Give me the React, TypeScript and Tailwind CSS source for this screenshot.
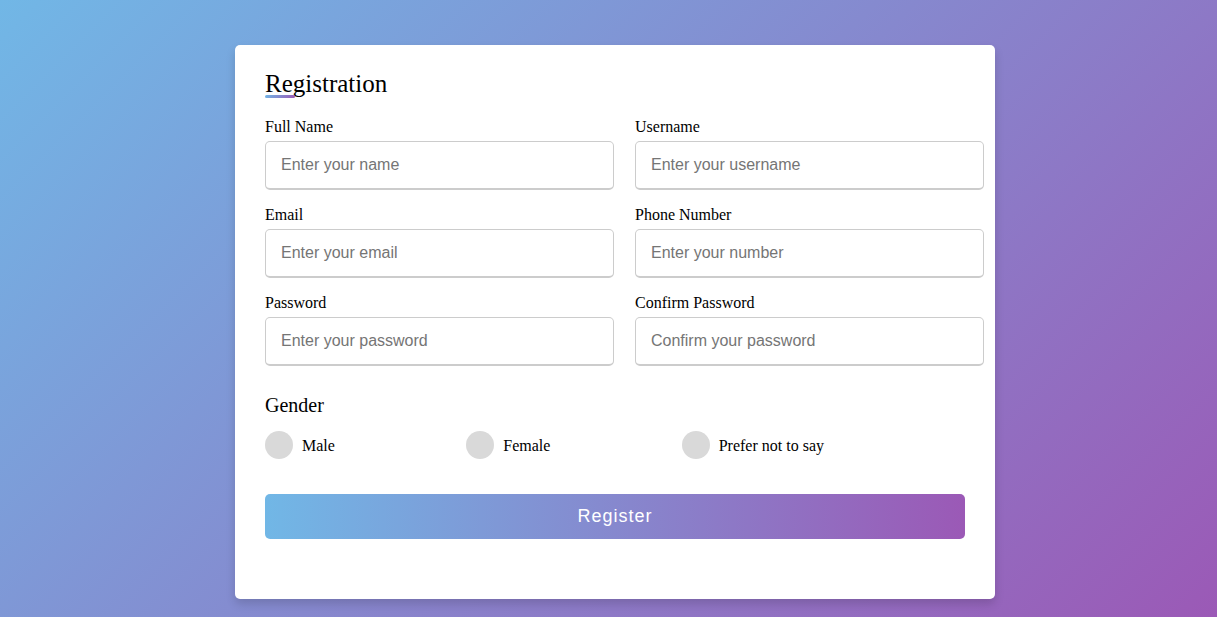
import { FC } from "react";

const fields = [
  { label: "Full Name", placeholder: "Enter your name" },
  { label: "Username", placeholder: "Enter your username" },
  { label: "Email", placeholder: "Enter your email" },
  { label: "Phone Number", placeholder: "Enter your number" },
  { label: "Password", placeholder: "Enter your password" },
  { label: "Confirm Password", placeholder: "Confirm your password" },
];

const genders = ["Male", "Female", "Prefer not to say"];

const App: FC = () => {
  return (
    <div className="min-h-screen w-full bg-[linear-gradient(135deg,#71b7e6,#9b59b6)] pt-[45px] pl-[235px] font-['Liberation_Serif',serif] text-black">
      <div className="w-[760px] h-[554px] rounded-[5px] bg-white px-[30px] pt-[25px] shadow-[0_5px_10px_rgba(0,0,0,0.15)]">
        {/* title */}
        <div className="relative h-[28px] text-[25px] leading-[28px]">
          Registration
          <span className="absolute left-0 bottom-0 h-[3px] w-[30px] rounded-[5px] bg-[linear-gradient(135deg,#71b7e6,#9b59b6)]" />
        </div>

        <form className="mt-[20px]">
          <div className="flex flex-wrap justify-between w-[700px]">
            {fields.map((f) => (
              <div key={f.label} className="w-[330px] mb-[16px]">
                <label className="block h-[18px] text-[16px] leading-[18px] mb-[5px]">{f.label}</label>
                <input
                  type="text"
                  placeholder={f.placeholder}
                  className="block w-[349px] h-[49px] box-border rounded-[5px] border border-b-2 border-[#ccc] pl-[15px] pr-[2px] outline-none font-['Liberation_Sans',sans-serif] text-[16px] placeholder:text-[#757575]"
                />
              </div>
            ))}
          </div>

          <div className="mt-[12px]">
            <div className="h-[23px] text-[20px] leading-[23px]">Gender</div>
            <div className="flex justify-between w-[559px] pt-[14px] pb-[14px]">
              {genders.map((g) => (
                <label key={g} className="flex items-center">
                  <span className="h-[28px] w-[28px] rounded-full bg-[#d9d9d9] mr-[9px]" />
                  <span className="text-[16px] leading-[18px] pt-[1px]">{g}</span>
                </label>
              ))}
            </div>
          </div>

          <button
            type="button"
            className="mt-[21px] block h-[45px] w-[700px] rounded-[5px] bg-[linear-gradient(to_right,#71b7e6,#9b59b6)] text-white text-[18px] tracking-[1px] font-['Liberation_Sans',sans-serif]"
          >
            Register
          </button>
        </form>
      </div>
    </div>
  );
};

export default App;
